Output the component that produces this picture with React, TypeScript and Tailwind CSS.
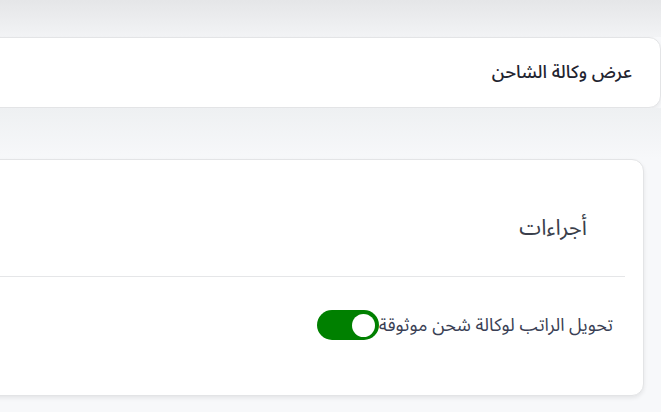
import { useState } from "react";

export default function App() {
  const [trusted, setTrusted] = useState(true);

  return (
    <div
      dir="rtl"
      className="min-h-[412px] overflow-hidden bg-[#f7f8fa] text-[#212529]"
      style={{ fontFamily: '"Noto Sans Arabic", "Noto Sans", "DejaVu Sans", sans-serif' }}
    >
      {/* شريط الظل العلوي */}
      <div className="h-[37px] bg-gradient-to-b from-[#e5e6e8] to-[#f2f3f5]" />

      <div className="w-[900px] pr-0">
        {/* بطاقة العنوان */}
        <div className="flex h-[71px] items-center rounded-xl border border-[#e3e4e6] bg-white pr-[28px] shadow-[0_2px_4px_rgba(0,0,0,0.06)]">
          <h1 className="text-[18px] font-medium text-[#1f2430]">عرض وكالة الشاحن</h1>
        </div>
      </div>

      <div className="h-[51px] bg-gradient-to-b from-[#eef0f2] to-[#f7f8fa]" />

      <div className="w-[900px] pr-[17px]">
        {/* بطاقة الإجراءات */}
        <div className="h-[237px] rounded-xl border border-[#e3e4e6] bg-white shadow-[0_2px_4px_rgba(0,0,0,0.08)]">
          <div className="flex h-[116px] items-center pr-[56px] pt-[20px]">
            <h2 className="text-[22px] font-normal text-[#3a3f4b]">أجراءات</h2>
          </div>
          <div className="mr-[18px] border-t border-[#e5e6e8]" />
          <div className="flex h-[96px] items-center pr-[30px]">
            <label className="flex cursor-pointer items-center">
              <span className="text-[18px] text-[#3a3f55]">تحويل الراتب لوكالة شحن موثوقة</span>
              <button
                type="button"
                role="switch"
                aria-checked={trusted}
                onClick={() => setTrusted(!trusted)}
                className={`relative ml-[2px] h-[30px] w-[62px] rounded-full ${trusted ? "bg-[#008000]" : "bg-[#d1d5db]"}`}
              >
                <span
                  className={`absolute top-[3.5px] h-[23px] w-[23px] rounded-full bg-white ${trusted ? "right-[3.5px]" : "left-[3.5px]"}`}
                />
              </button>
            </label>
          </div>
        </div>
      </div>
    </div>
  );
}
